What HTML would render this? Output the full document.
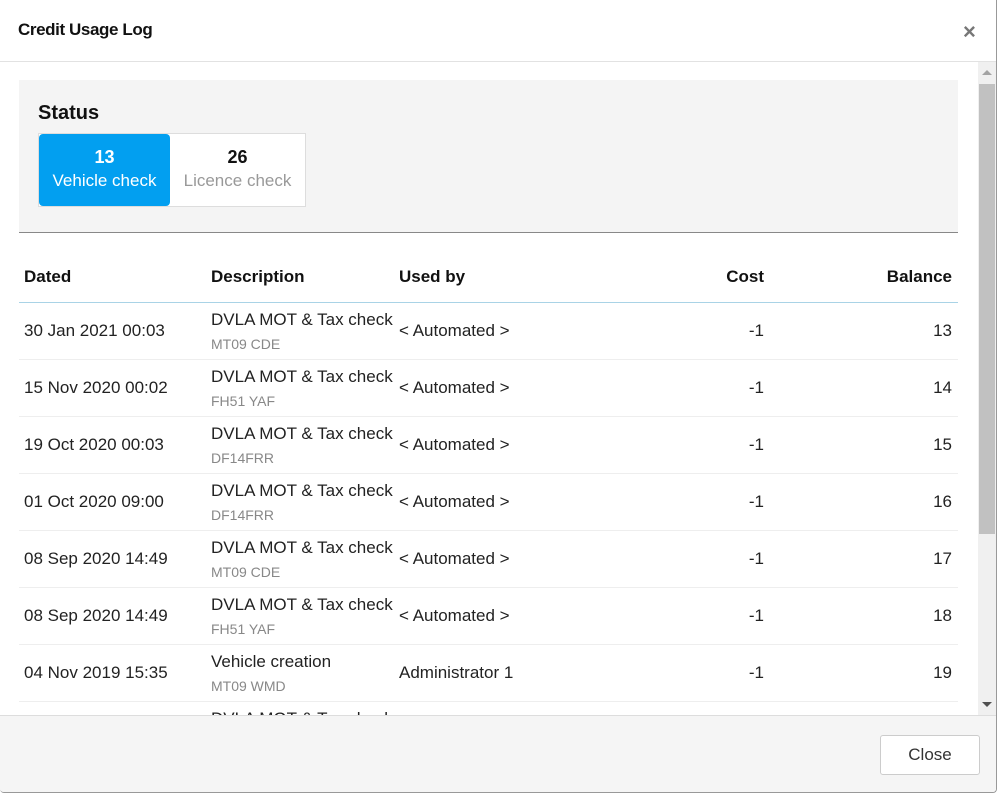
<!DOCTYPE html>
<html><head><style>
*{box-sizing:border-box;margin:0;padding:0}
body{width:999px;height:794px;background:#fff;font-family:"Liberation Sans",sans-serif;color:#222;position:relative;overflow:hidden}
.modal{position:absolute;left:0;top:0;width:997px;height:793px;border:1px solid #999;border-top:none;border-left:none;border-radius:0 0 4px 4px;background:#fff;overflow:hidden}
.hdr{height:62px;border-bottom:1px solid #e2e2e2;position:relative}
.hdr h1{position:absolute;left:18px;top:20px;font-size:17px;font-weight:bold;color:#111;letter-spacing:-0.4px}
.x{position:absolute;left:963px;top:19px;font-size:22px;color:#777;font-weight:bold}
.body{position:absolute;top:62px;left:0;width:978px;height:653px;overflow:hidden}
.sb{position:absolute;left:978px;top:62px;width:18px;height:653px;background:#f0f0f0}
.sb .th{position:absolute;left:1px;top:22px;width:16px;height:450px;background:#c1c1c1}
.sb .up{position:absolute;left:4px;top:8px;border:5px solid transparent;border-bottom:5px solid #a3a3a3;border-top:none}
.sb .dn{position:absolute;left:4px;bottom:8px;border:5px solid transparent;border-top:5px solid #505050;border-bottom:none}
.status{position:absolute;left:19px;top:18px;width:939px;height:153px;background:#f4f4f4;border-bottom:1px solid #888}
.status h2{position:absolute;left:19px;top:22px;font-size:20px;font-weight:bold;color:#111}
.btns{position:absolute;left:19px;top:53px;width:268px;height:74px;border:1px solid #ddd;background:#fff}
.b{position:absolute;top:0;height:72px;text-align:center;padding-top:13px;font-size:17px}
.b1{left:0;width:131px;background:#029ff0;color:#fff;border-radius:4px}
.b2{left:131px;width:135px;color:#999}
.b strong{display:block;font-size:18px;margin-bottom:3px}
.b2 strong{color:#111}
.tbl{position:absolute;left:19px;top:171px;width:939px}
.th2{height:70px;border-bottom:1px solid #a9d3e6;position:relative;font-weight:bold;font-size:17px;color:#111}
.row{height:57px;border-bottom:1px solid #eee;position:relative;font-size:17px;color:#222}
.c{position:absolute;white-space:nowrap}
.th2 .c{top:34px}
.row .m{top:18px}
.row .d1{top:7px}
.row .d2{top:33px;font-size:14px;color:#888}
.r1{right:194px}.r2{right:6px}
.ftr{position:absolute;top:715px;left:0;width:997px;height:78px;background:#f5f5f5;border-top:1px solid #ddd}
.close{position:absolute;left:880px;top:19px;width:100px;height:40px;border:1px solid #ccc;border-radius:3px;background:#fff;font-size:17px;color:#333;text-align:center;line-height:38px}
</style></head><body>
<div class="modal">
<div class="hdr"><h1>Credit Usage Log</h1><div class="x">×</div></div>
<div class="body">
<div class="status"><h2>Status</h2>
<div class="btns"><div class="b b1"><strong>13</strong>Vehicle check</div><div class="b b2"><strong>26</strong>Licence check</div></div></div>
<div class="tbl">
<div class="th2"><span class="c" style="left:5px">Dated</span><span class="c" style="left:192px">Description</span><span class="c" style="left:380px">Used by</span><span class="c r1">Cost</span><span class="c r2">Balance</span></div>
<div class="row"><span class="c m" style="left:5px">30 Jan 2021 00:03</span><span class="c d1" style="left:192px">DVLA MOT &amp; Tax check</span><span class="c d2" style="left:192px">MT09 CDE</span><span class="c m" style="left:380px">&lt; Automated &gt;</span><span class="c m r1">-1</span><span class="c m r2">13</span></div>
<div class="row"><span class="c m" style="left:5px">15 Nov 2020 00:02</span><span class="c d1" style="left:192px">DVLA MOT &amp; Tax check</span><span class="c d2" style="left:192px">FH51 YAF</span><span class="c m" style="left:380px">&lt; Automated &gt;</span><span class="c m r1">-1</span><span class="c m r2">14</span></div>
<div class="row"><span class="c m" style="left:5px">19 Oct 2020 00:03</span><span class="c d1" style="left:192px">DVLA MOT &amp; Tax check</span><span class="c d2" style="left:192px">DF14FRR</span><span class="c m" style="left:380px">&lt; Automated &gt;</span><span class="c m r1">-1</span><span class="c m r2">15</span></div>
<div class="row"><span class="c m" style="left:5px">01 Oct 2020 09:00</span><span class="c d1" style="left:192px">DVLA MOT &amp; Tax check</span><span class="c d2" style="left:192px">DF14FRR</span><span class="c m" style="left:380px">&lt; Automated &gt;</span><span class="c m r1">-1</span><span class="c m r2">16</span></div>
<div class="row"><span class="c m" style="left:5px">08 Sep 2020 14:49</span><span class="c d1" style="left:192px">DVLA MOT &amp; Tax check</span><span class="c d2" style="left:192px">MT09 CDE</span><span class="c m" style="left:380px">&lt; Automated &gt;</span><span class="c m r1">-1</span><span class="c m r2">17</span></div>
<div class="row"><span class="c m" style="left:5px">08 Sep 2020 14:49</span><span class="c d1" style="left:192px">DVLA MOT &amp; Tax check</span><span class="c d2" style="left:192px">FH51 YAF</span><span class="c m" style="left:380px">&lt; Automated &gt;</span><span class="c m r1">-1</span><span class="c m r2">18</span></div>
<div class="row"><span class="c m" style="left:5px">04 Nov 2019 15:35</span><span class="c d1" style="left:192px">Vehicle creation</span><span class="c d2" style="left:192px">MT09 WMD</span><span class="c m" style="left:380px">Administrator 1</span><span class="c m r1">-1</span><span class="c m r2">19</span></div>
<div class="row"><span class="c d1" style="left:192px">DVLA MOT &amp; Tax check</span></div>
</div>
</div>
<div class="sb"><div class="up"></div><div class="th"></div><div class="dn"></div></div>
<div class="ftr"><div class="close">Close</div></div>
</div>
</body></html>
